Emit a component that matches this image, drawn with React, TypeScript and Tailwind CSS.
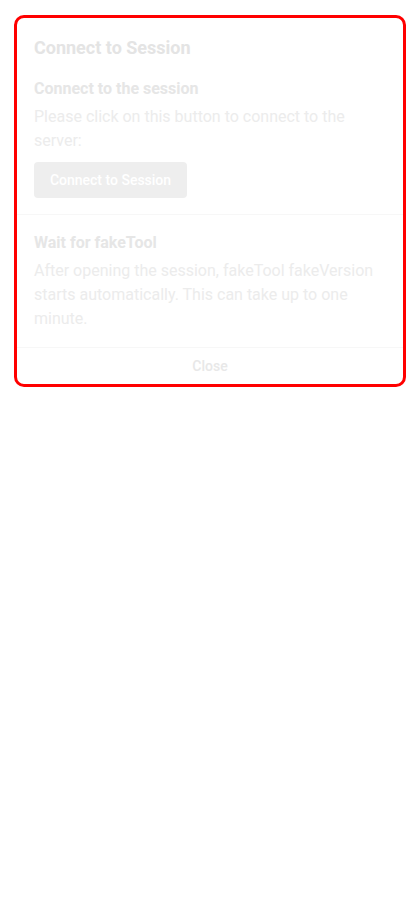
export default function App() {
  return (
    <div className="min-h-screen bg-white pt-[15px] pl-[14px] pr-[14px]" style={{ fontFamily: 'Roboto, "Liberation Sans", sans-serif' }}>
      <div className="w-[392px] rounded-[10px] border-[3px] border-[#ff0000] bg-white">
        <div className="px-[17px] pt-4">
          <h2 className="text-[18px] leading-[28px] font-bold text-[#e4e4e4]">Connect to Session</h2>

          <div className="mt-[15px]">
            <h3 className="text-[16px] leading-[24px] font-bold text-[#e6e6e6]">Connect to the session</h3>
            <p className="mt-1 text-[16px] leading-[24px] text-[#ececec]">
              Please click on this button to connect to the server:
            </p>
            <button className="mt-[9px] h-[36px] w-[153px] rounded bg-[#eeeeee] text-[14px] font-medium text-white">
              Connect to Session
            </button>
          </div>
        </div>

        <div className="mt-4 h-px bg-[#f7f7f7]" />

        <div className="px-[17px] pt-[16px] pb-[16px]">
          <h3 className="text-[16px] leading-[24px] font-bold text-[#e6e6e6]">Wait for fakeTool</h3>
          <p className="mt-1 text-[16px] leading-[24px] text-[#ececec]">
            After opening the session, fakeTool fakeVersion starts automatically. This can take up to one minute.
          </p>
        </div>

        <div className="h-px bg-[#f7f7f7]" />

        <div className="flex h-[36px] items-center justify-center">
          <button className="text-[14px] font-medium text-[#e8e8e8]">Close</button>
        </div>
      </div>
    </div>
  );
}
